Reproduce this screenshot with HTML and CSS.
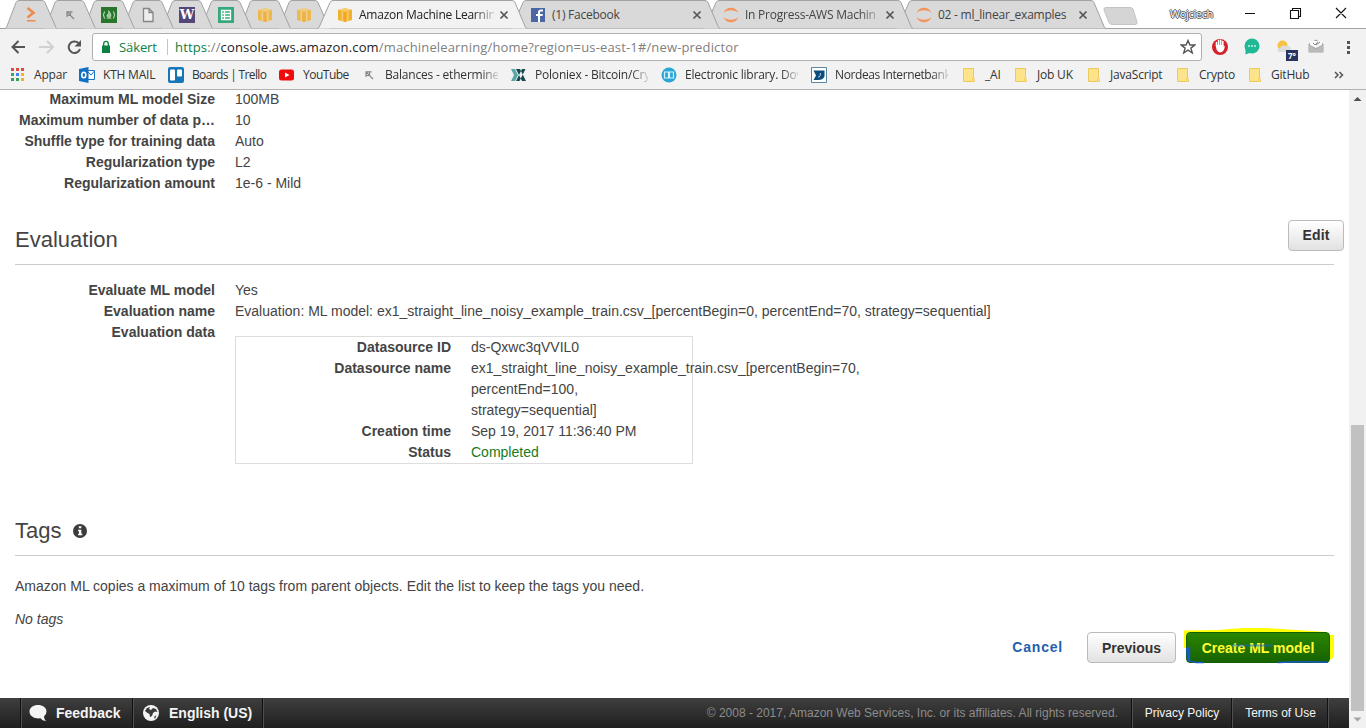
FILE: index.html
```html
<!DOCTYPE html>
<html lang="en">
<head>
<meta charset="utf-8">
<title>Amazon Machine Learning</title>
<link rel="stylesheet" href="styles.css">
</head>
<body>
<svg class="defs" width="0" height="0">
  <symbol id="tab-small" viewBox="0 0 52 29"><path d="M0 28.5L1.500 27.500L11 2.500Q12 .5 14 .5H37Q39 .5 40 2.500L51 27.500L52 28.500"/></symbol>
  <symbol id="tab-large" viewBox="0 0 210 29"><path d="M0 28.5L2 27.500L13 2.500Q14 .5 16 .5H195Q197 .5 198 2.500L208.500 27.500L210 28.500"/></symbol>
  <symbol id="cube" viewBox="0 0 16 16"><path d="M1 3L8 1.200L15 3V13L8 15L1 13Z" fill="#f2b02f"/><path d="M1 3L8 4.800L15 3L8 1.200Z" fill="#f9cb68"/><path d="M5.200 4.500V14M10.800 4.500V14" stroke="#f8d285" stroke-width="1.200"/><path d="M8 5V15" stroke="#e9a11c"/></symbol>
  <symbol id="jupyter" viewBox="0 0 16 16"><path d="M.5 6C3 -1 13 -1 15.500 6C12 2.300 4 2.300 .5 6ZM.5 10C3 17 13 17 15.500 10C12 13.700 4 13.700 .5 10Z" fill="#f5935a"/></symbol>
  <symbol id="pick" viewBox="0 0 16 16"><path d="M5 5L12 12M5 10V4.800H10.500M5 8.500H8.500V5" stroke="#888" stroke-width="1.200" fill="none"/></symbol>
  <symbol id="close" viewBox="0 0 10 10"><path d="M1.500 1.500L8.500 8.500M8.500 1.500L1.500 8.500" stroke="#555" stroke-width="1.700"/></symbol>
  <symbol id="folder" viewBox="0 0 16 16"><path d="M1.500 1.500H11.500V11L12.500 14.500H1.500Z" fill="#fde48b" stroke="#ecc95a"/><path d="M10.500 14.500V11.500L12 10.500V14.500" fill="#fff0b0" stroke="#ecc95a" stroke-width=".8"/></symbol>
</svg>

<header class="browser">
  <div class="tabstrip">
    <div class="tab pin"><svg class="shape"><use href="#tab-small"/></svg><svg class="ico" viewBox="0 0 16 16"><path d="M4.500 1L10.500 5.800L4.500 10.500" fill="none" stroke="#ee8a4c" stroke-width="2.600"/><path d="M4 13.800H12.500" stroke="#ee8a4c" stroke-width="1.500"/></svg></div>
    <div class="tab pin"><svg class="shape"><use href="#tab-small"/></svg><svg class="ico"><use href="#pick"/></svg></div>
    <div class="tab pin"><svg class="shape"><use href="#tab-small"/></svg><svg class="ico" viewBox="0 0 16 16"><path d="M0 0H16V16H0Z" fill="#28752b"/><path d="M3.500 4.500Q1.500 8 3.500 11.500M12.500 4.500Q14.500 8 12.500 11.500" stroke="#cfe6cf" fill="none"/><path d="M7.500 3.500Q11.500 7.500 9.500 10.500H6.500Q4.800 8 7.500 6.500ZM5.500 11.500H10.500" fill="#9bcb9b" stroke="#b4d9b4" stroke-width=".6"/></svg></div>
    <div class="tab pin"><svg class="shape"><use href="#tab-small"/></svg><svg class="ico" viewBox="0 0 16 16"><path d="M3.500 1.500H9L13 5.500V14.500H3.500ZM9 1.500V5.500H13" fill="#eee" stroke="#858585" stroke-width="1.300"/></svg></div>
    <div class="tab pin"><svg class="shape"><use href="#tab-small"/></svg><span class="ico word">W</span></div>
    <div class="tab pin"><svg class="shape"><use href="#tab-small"/></svg><svg class="ico" viewBox="0 0 16 16"><path d="M0 0H16V16H0Z" fill="#35a979"/><path d="M3.500 3.500H12.500V12.500H3.500ZM3.500 6.500H12.500M3.500 9.500H12.500M6.500 3.500V12.500" fill="none" stroke="#fff" stroke-width="1.300"/></svg></div>
    <div class="tab pin"><svg class="shape"><use href="#tab-small"/></svg><svg class="ico soft"><use href="#cube"/></svg></div>
    <div class="tab pin"><svg class="shape"><use href="#tab-small"/></svg><svg class="ico soft"><use href="#cube"/></svg></div>
    <div class="tab wide active"><svg class="shape"><use href="#tab-large"/></svg><svg class="ico"><use href="#cube"/></svg><span class="title fade">Amazon Machine Learnin</span><svg class="x"><use href="#close"/></svg></div>
    <div class="tab wide"><svg class="shape"><use href="#tab-large"/></svg><svg class="ico" viewBox="0 0 16 16"><path d="M1 1H15V15H1Z" fill="#4a66a4"/><path d="M10 15V9H12.500L13 7H10V5.500Q10 4.500 11.200 4.500H13V2.500H11Q8 2.500 8 5.200V7H6V9H8V15Z" fill="#fff"/></svg><span class="title">(1) Facebook</span><svg class="x"><use href="#close"/></svg></div>
    <div class="tab wide"><svg class="shape"><use href="#tab-large"/></svg><svg class="ico"><use href="#jupyter"/></svg><span class="title fade">In Progress-AWS Machin</span><svg class="x"><use href="#close"/></svg></div>
    <div class="tab wide"><svg class="shape"><use href="#tab-large"/></svg><svg class="ico"><use href="#jupyter"/></svg><span class="title">02 - ml_linear_examples</span><svg class="x"><use href="#close"/></svg></div>
    <svg class="newtab" viewBox="0 0 36 20"><path d="M3 1.500H27Q29 1.500 30 3L34 16Q34.500 18.500 32 18.500H9Q7 18.500 6 16.500L1 4Q.5 1.500 3 1.500Z" fill="#d5d5d5" stroke="#c4c4c4"/></svg>
    <span class="user">Wojciech</span>
    <svg class="win" viewBox="0 0 102 14"><path d="M0 7.500H10M45.500 4.500H53.500V12.500H45.500ZM47.500 4.500V2.500H55.500V10.500H53.500M91 2L101 12M101 2L91 12" fill="none" stroke="#111" stroke-width="1.100"/></svg>
  </div>

  <div class="toolbar">
    <svg class="nav" viewBox="0 0 76 18"><path d="M15 9H3M8.500 3L2.500 9L8.500 15" fill="none" stroke="#555" stroke-width="2"/><path d="M29 9H42M37 3L43 9L37 15" fill="none" stroke="#d0d0d0" stroke-width="2"/><path d="M68.500 5A5.800 5.800 0 1 0 70 11" fill="none" stroke="#555" stroke-width="2"/><path d="M71 2V8.500H64.500Z" fill="#555"/></svg>
    <div class="omnibox">
      <svg class="lock" viewBox="0 0 10 14"><path d="M1 5.500H9V13H1Z" fill="#0b8043"/><path d="M2.700 6V3.700A2.300 2.300 0 0 1 7.300 3.700V6" fill="none" stroke="#0b8043" stroke-width="1.300"/></svg>
      <span class="secure">Säkert</span><i class="bar"></i>
      <span class="url"><b class="g">https</b>://<b>console.aws.amazon.com</b>/machinelearning/home?region=us-east-1#/new-predictor</span>
      <svg class="star" viewBox="0 0 16 16"><path d="M8 1.500L9.900 6H14.800L10.900 9.100L12.300 14L8 11.200L3.700 14L5.100 9.100L1.200 6H6.100Z" fill="none" stroke="#555" stroke-width="1.400"/></svg>
    </div>
    <svg class="exts" viewBox="0 0 150 24"><circle cx="9" cy="11" r="8" fill="#d5202b"/><path d="M5.500 10V6.500M7.600 9V4.500M9.700 9V4.300M11.800 10V5.500" stroke="#fff" stroke-width="1.600" stroke-linecap="round"/><path d="M4.800 9H12.600V11L14 9.500Q13 16.500 9 16.500Q5 16 4.800 9Z" fill="#fff"/>
      <circle cx="41" cy="10" r="7.500" fill="#20b996"/><path d="M34.500 12V18.500L41 16Z" fill="#20b996"/><path d="M37.300 10h1.500m1.500 0h1.500m1.500 0h1.500" stroke="#fff" stroke-width="1.500"/>
      <circle cx="71.500" cy="9.500" r="5" fill="#f6c445"/><path d="M67 16Q65 13 69 12Q71 8 75 10Q79 9 80 13Q82 16 78 16Z" fill="#dcdcdc"/><path d="M75 14H87V25H75Z" fill="#29335f"/><text x="77" y="22.500" class="temp">7°</text>
      <path d="M97.500 8L105 3.500L112.500 8V16.500H97.500Z" fill="#a4a4a4"/><path d="M99 5H111V9L105 12L99 9Z" fill="#f8f8f8"/><path d="M102 7L104 9L107 6M105 9L109 6" fill="none" stroke="#888"/><path d="M98 9L105 13L112 9V16H98Z" fill="#b9b9b9"/>
      <path d="M136 5h3v3h-3zM136 10h3v3h-3zM136 15h3v3h-3z" fill="#555"/></svg>
  </div>

  <nav class="bookmarks">
    <a><svg class="ico" viewBox="0 0 16 16"><path d="M1 1h3v3H1zM6 1h3v3H6zM11 1h3v3h-3z" fill="#dd4b3e"/><path d="M1 6h3v3H1z" fill="#34a853"/><path d="M6 6h3v3H6z" fill="#4285f4"/><path d="M11 6h3v3h-3zM11 11h3v3h-3z" fill="#f2b32a"/><path d="M1 11h3v3H1zM6 11h3v3H6z" fill="#34a05a"/></svg><span>Appar</span></a>
    <a><svg class="ico" viewBox="0 0 16 16"><path d="M8 3.500H15.500V12.500H8Z" fill="#fff" stroke="#1874c5"/><path d="M8 4L12 8L15.500 4" fill="none" stroke="#1874c5"/><path d="M0 2L9.500 0V16L0 14Z" fill="#1270c4"/><ellipse cx="4.800" cy="8" rx="2" ry="2.700" fill="none" stroke="#fff" stroke-width="1.600"/></svg><span>KTH MAIL</span></a>
    <a><svg class="ico" viewBox="0 0 16 16"><rect width="16" height="16" rx="2" fill="#1776b6"/><rect x="2" y="2.500" width="5" height="11" rx="1" fill="#fff"/><rect x="9" y="2.500" width="5" height="7" rx="1" fill="#fff"/></svg><span class="trello">Boards | Trello</span></a>
    <a><svg class="ico" viewBox="0 0 16 16"><rect x="0" y="2.500" width="15" height="11" rx="2.500" fill="#f00c0c"/><path d="M6 5.500L10.500 8L6 10.500Z" fill="#fff"/></svg><span class="youtube">YouTube</span></a>
    <a><svg class="ico"><use href="#pick"/></svg><span class="fade">Balances - ethermine</span></a>
    <a><svg class="ico" viewBox="0 0 16 16"><path d="M0 2H4L7 8L4 14H0L3 8Z" fill="#55a6a4"/><path d="M5 2H9L15 14H11ZM14.500 2H11L5 14H8.500Z" fill="#16494f"/></svg><span class="fade">Poloniex - Bitcoin/Cry</span></a>
    <a><svg class="ico" viewBox="0 0 16 16"><circle cx="8" cy="8" r="7.500" fill="#28a6d6"/><path d="M3.500 5H7.500V11H3.500ZM8.500 5H12.500V11H8.500Z" fill="none" stroke="#d9f1fa" stroke-width="1.200"/></svg><span class="fade">Electronic library. Dov</span></a>
    <a><svg class="ico" viewBox="0 0 16 16"><path d="M.5 .5H15.500V15.500H.5Z" fill="#fff" stroke="#5b86a3"/><path d="M2.500 3.500H13.500V9.500Q12 13 7 13H2.500L5 8.500Z" fill="#0c4c7c"/><path d="M7 10.500Q10 9.500 9.500 6" fill="none" stroke="#b7cede"/></svg><span class="fade nordea">Nordeas Internetbank</span></a>
    <a><svg class="ico"><use href="#folder"/></svg><span>_AI</span></a>
    <a><svg class="ico"><use href="#folder"/></svg><span>Job UK</span></a>
    <a><svg class="ico"><use href="#folder"/></svg><span>JavaScript</span></a>
    <a><svg class="ico"><use href="#folder"/></svg><span>Crypto</span></a>
    <a><svg class="ico"><use href="#folder"/></svg><span>GitHub</span></a>
    <svg class="more" viewBox="0 0 10 8"><path d="M1 1L4 4L1 7M5.500 1L8.500 4L5.500 7" fill="none" stroke="#555" stroke-width="1.500"/></svg>
  </nav>
</header>

<div class="viewport">
  <div class="page">
    <main class="content">
      <dl class="props">
        <dt>Maximum ML model Size</dt><dd>100MB</dd>
        <dt>Maximum number of data p…</dt><dd>10</dd>
        <dt>Shuffle type for training data</dt><dd>Auto</dd>
        <dt>Regularization type</dt><dd>L2</dd>
        <dt>Regularization amount</dt><dd>1e-6 - Mild</dd>
      </dl>
      <div class="section evaluation"><h2>Evaluation</h2><button class="btn edit">Edit</button></div>
      <dl class="props">
        <dt>Evaluate ML model</dt><dd>Yes</dd>
        <dt>Evaluation name</dt><dd>Evaluation: ML model: ex1_straight_line_noisy_example_train.csv_[percentBegin=0, percentEnd=70, strategy=sequential]</dd>
        <dt>Evaluation data</dt>
        <dd>
          <dl class="props source">
            <dt>Datasource ID</dt><dd>ds-Qxwc3qVVIL0</dd>
            <dt>Datasource name</dt><dd>ex1_straight_line_noisy_example_train.csv_[percentBegin=70,<br>percentEnd=100,<br>strategy=sequential]</dd>
            <dt>Creation time</dt><dd>Sep 19, 2017 11:36:40 PM</dd>
            <dt>Status</dt><dd class="ok">Completed</dd>
          </dl>
        </dd>
      </dl>
      <div class="section tags"><h2>Tags</h2><svg class="info" viewBox="0 0 14 14"><circle cx="7" cy="7" r="7" fill="#3c3c3c"/><path d="M5.800 2.300h2.500v2H5.800zM5 5.700h3.300v4H9.300v1.500H5V9.700h1V7.200H5z" fill="#fff"/></svg></div>
      <p>Amazon ML copies a maximum of 10 tags from parent objects. Edit the list to keep the tags you need.</p>
      <p class="none">No tags</p>
      <div class="actions">
        <a class="cancel">Cancel</a>
        <button class="btn prev">Previous</button>
        <div class="marked">
          <svg class="marker" viewBox="0 0 154 40"><path d="M0 2.500L35 2Q65 -2 105 1.500L143 4V7H150V27Q149 32 144 32L120 30H4V20H0Z" fill="#ff0"/></svg>
          <button class="btn create">Create ML model</button>
          <svg class="marker" viewBox="0 0 154 40"><path d="M2 20H5.500V33L12 34.500H20M94 34.500Q120 33 144 34.300" fill="none" stroke="#165ac4" stroke-width="1.500"/><path d="M2 20H5.500V34L3 32Z" fill="#165ac4"/><path d="M47 17.500H90" stroke="#1c66c8" stroke-width="2" opacity=".55"/></svg>
        </div>
      </div>
    </main>
    <footer class="footer">
      <div class="cell edge"></div>
      <div class="cell feedback"><svg viewBox="0 0 18 18"><path d="M9 1C13.500 1 17.500 3.500 17.500 7.500Q17.500 10.500 15 12.500Q15 15.500 17 17Q13 16.800 11.500 14.300C6 15 .5 12.500 .5 7.500C.5 3.500 4.500 1 9 1Z" fill="#f4f4f4"/></svg>Feedback</div>
      <div class="cell lang"><svg viewBox="0 0 18 18"><circle cx="9" cy="9" r="8" fill="#f4f4f4"/><path d="M3 7L5 4L8 3L7 5L9 6L11 4L14 5L15.500 8L13 7.500L11 9L10 12L8 13L7.500 10L5.500 9ZM12 13L14.500 11L13 15Z" fill="#3a3a3a"/></svg>English (US)</div>
      <div class="cell copy">© 2008 - 2017, Amazon Web Services, Inc. or its affiliates. All rights reserved.</div>
      <div class="cell link privacy">Privacy Policy</div>
      <div class="cell link terms">Terms of Use</div>
      <div class="cell end"></div>
    </footer>
  </div>
  <div class="scroll"><svg viewBox="0 0 17 17"><path d="M4.500 11L8.500 7L12.500 11Z" fill="#505050"/></svg><i class="thumb"></i><svg viewBox="0 0 17 17"><path d="M4.500 6.500L8.500 10.500L12.500 6.500Z" fill="#a3a3a3"/></svg></div>
</div>
</body>
</html>
```

FILE: styles.css
```css
* { box-sizing: border-box; }
body { margin: 0; width: 1366px; height: 728px; overflow: hidden; background: #fff; font-family: "Liberation Sans", Arial, sans-serif; font-size: 14px; color: #444; }
svg { display: block; flex: none; }
.defs { position: absolute; }
.ico { width: 16px; height: 16px; flex: none; }
.browser { height: 90px; background: #f2f2f2; border-bottom: 1px solid #b1b1b1; font-family: "Open Sans", "Noto Sans", sans-serif; font-size: 12px; }

.tabstrip { display: flex; height: 29px; padding-left: 5px; background: #fff; box-shadow: inset 0 -1px #a2a2a2; isolation: isolate; }
.tab { position: relative; display: flex; align-items: center; height: 29px; flex: none; isolation: isolate; }
.tab .shape { position: absolute; left: 0; top: 0; width: 100%; height: 29px; z-index: -1; fill: #d9d9d9; stroke: #a2a2a2; }
.pin { width: 52px; margin-right: -13px; padding-left: 18px; }
.pin:nth-child(1) { z-index: 10; }
.pin:nth-child(2) { z-index: 9; }
.pin:nth-child(3) { z-index: 8; }
.pin:nth-child(4) { z-index: 7; }
.pin:nth-child(5) { z-index: 6; }
.pin:nth-child(6) { z-index: 5; }
.pin:nth-child(7) { z-index: 4; }
.pin:nth-child(8) { z-index: 3; }
.wide { width: 210px; margin-right: -17px; padding-left: 20px; z-index: 3; }
.wide:nth-child(11) { z-index: 2; }
.wide:nth-child(12) { z-index: 1; }
.tab.active { z-index: 20; }
.tab.active .shape { fill: #f2f2f2; }
.tab.active .title { color: #222; }
.soft { opacity: .8; }
.word { background: #53477a; color: #fff; font: bold 13px/16px "DejaVu Serif", serif; text-align: center; }
.title { width: 135px; margin: 0 5px 0 6px; white-space: nowrap; overflow: hidden; color: #444; letter-spacing: -.24px; }
.fade { -webkit-mask-image: linear-gradient(90deg, #000 85%, transparent 103%); mask-image: linear-gradient(90deg, #000 85%, transparent 103%); }
.x { width: 10px; height: 10px; margin-top: 1px; }
.newtab { width: 36px; height: 20px; margin: 6px 0 0 14px; }
.user { width: 46px; margin: 6px 0 0 31px; font-size: 11px; line-height: 16px; letter-spacing: -.35px; color: #fff; text-shadow: 1px 0 #555, -1px 0 #555, 0 1px #555, 0 -1px #555; }
.win { width: 102px; height: 14px; margin: 6px 0 0 29px; }

.toolbar { display: flex; align-items: center; height: 36px; padding-left: 10px; }
.nav { width: 76px; height: 18px; }
.omnibox { display: flex; align-items: center; width: 1110px; height: 28px; margin-left: 6px; border: 1px solid #b0b0b0; border-radius: 3px; background: #fff; }
.lock { width: 10px; height: 14px; margin-left: 8px; }
.secure { width: 40px; margin-left: 8px; color: #0b8043; font-size: 13px; letter-spacing: -.1px; }
.bar { width: 1px; height: 16px; margin: 0 7px 0 8px; background: #c4c4c4; }
.url { width: 1005px; color: #808080; font-size: 13px; letter-spacing: .155px; white-space: nowrap; }
.url b { font-weight: 400; color: #222; }
.url .g { color: #0b8043; }
.star { width: 16px; height: 16px; }
.exts { width: 150px; height: 24px; margin: 1px 0 0 9px; overflow: visible; }
.temp { fill: #fff; font: bold 8px "Open Sans", sans-serif; }

.bookmarks { display: flex; height: 20px; padding-left: 10px; color: #333; }
.bookmarks a { display: flex; align-items: center; flex: none; width: 89px; }
.bookmarks span { margin: -1px 0 0 8px; white-space: nowrap; letter-spacing: -.2px; }
.bookmarks .fade { width: 113px; }
.bookmarks .trello { letter-spacing: -.65px; }
.bookmarks .youtube { letter-spacing: -.5px; }
.bookmarks .nordea { letter-spacing: -.4px; }
.bookmarks a:nth-child(1) { width: 69px; }
.bookmarks a:nth-child(3) { width: 111px; }
.bookmarks a:nth-child(4) { width: 82px; }
.bookmarks a:nth-child(n+5):nth-child(-n+8) { width: 150px; }
.bookmarks a:nth-child(9) { width: 52px; }
.bookmarks a:nth-child(10) { width: 73px; }
.bookmarks a:nth-child(12) { width: 72px; }
.bookmarks a:nth-child(n+9) .ico { margin-left: 1px; }
.bookmarks a:nth-child(n+9) span { margin-left: 7px; }
.more { width: 10px; height: 8px; margin: 6px 0 0 -2px; }

.viewport { display: flex; height: 638px; }
.page { display: flex; flex-direction: column; width: 1349px; overflow: hidden; }
.content { height: 609px; padding: 0 15px; margin-top: -1px; flex: none; }
.props { display: grid; grid-template-columns: 200px auto; column-gap: 20px; margin: 0; line-height: 21px; }
dt { font-weight: bold; text-align: right; white-space: nowrap; }
dd { margin: 0; white-space: nowrap; }
.source { width: 458px; height: 128px; margin-top: 14px; grid-template-columns: 215px 200px; border: 1px solid #ddd; }
.ok { color: #1a7a1a; }
.section { display: flex; align-items: center; border-bottom: 1px solid #ccc; width: 1319px; }
.evaluation { justify-content: space-between; height: 51px; margin: 20px 0 15px; }
.evaluation h2 { padding-top: 2px; }
.evaluation .btn { margin: -8px -10px 0 0; }
h2 { margin: 0; font-size: 22px; font-weight: 400; line-height: 30px; }
.btn { height: 31px; padding: 0; border: 1px solid #bbb; border-radius: 4px; background: linear-gradient(#fff, #e2e2e2); color: #333; font: bold 14px "Liberation Sans", Arial, sans-serif; text-align: center; white-space: nowrap; }
.edit { width: 56px; letter-spacing: .2px; }
.tags { height: 50px; margin: 42px 0 20px; }
.info { width: 14px; height: 14px; margin: 1px 0 0 12px; }
p { margin: 0 0 12px; line-height: 21px; }
.none { margin: 0; font-style: italic; }
.actions { display: flex; align-items: center; justify-content: flex-end; margin: 2px 4px 0 0; }
.cancel { margin: -2px 24px 0 0; color: #1f5fae; font-weight: bold; letter-spacing: .8px; }
.prev { width: 89px; margin-right: 10px; }
.marked { position: relative; }
.create { position: relative; display: block; width: 144px; border-color: #126000; background: linear-gradient(#2a8600, #176200); color: #ff3; }
.marker { position: absolute; left: -2px; top: -4px; width: 154px; height: 40px; }

.footer { display: flex; height: 30px; flex: none; background: linear-gradient(#3f3f3f, #1f1f1f); color: #f4f4f4; font-weight: bold; line-height: 30px; }
.cell { display: flex; align-items: center; flex: none; border-right: 1px solid #111; box-shadow: 1px 0 #505050; white-space: nowrap; }
.cell svg { width: 18px; height: 18px; margin-right: 9px; }
.edge { width: 21px; }
.feedback { width: 112px; padding-left: 8px; }
.lang { width: 130px; padding-left: 9px; }
.copy { width: 869px; justify-content: flex-end; padding-right: 13px; color: #8c8c8c; font-size: 12px; font-weight: 400; }
.link { justify-content: center; font-size: 12px; font-weight: 400; }
.privacy { width: 100px; padding-left: 1px; }
.terms { width: 96px; padding-left: 2px; }
.end { flex: 1; border: 0; }
.scroll { display: flex; flex-direction: column; width: 17px; background: #f1f1f1; }
.scroll svg { width: 17px; height: 17px; }
.thumb { width: 13px; height: 286px; margin: 318px 0 0 2px; background: #c1c1c1; }
```
